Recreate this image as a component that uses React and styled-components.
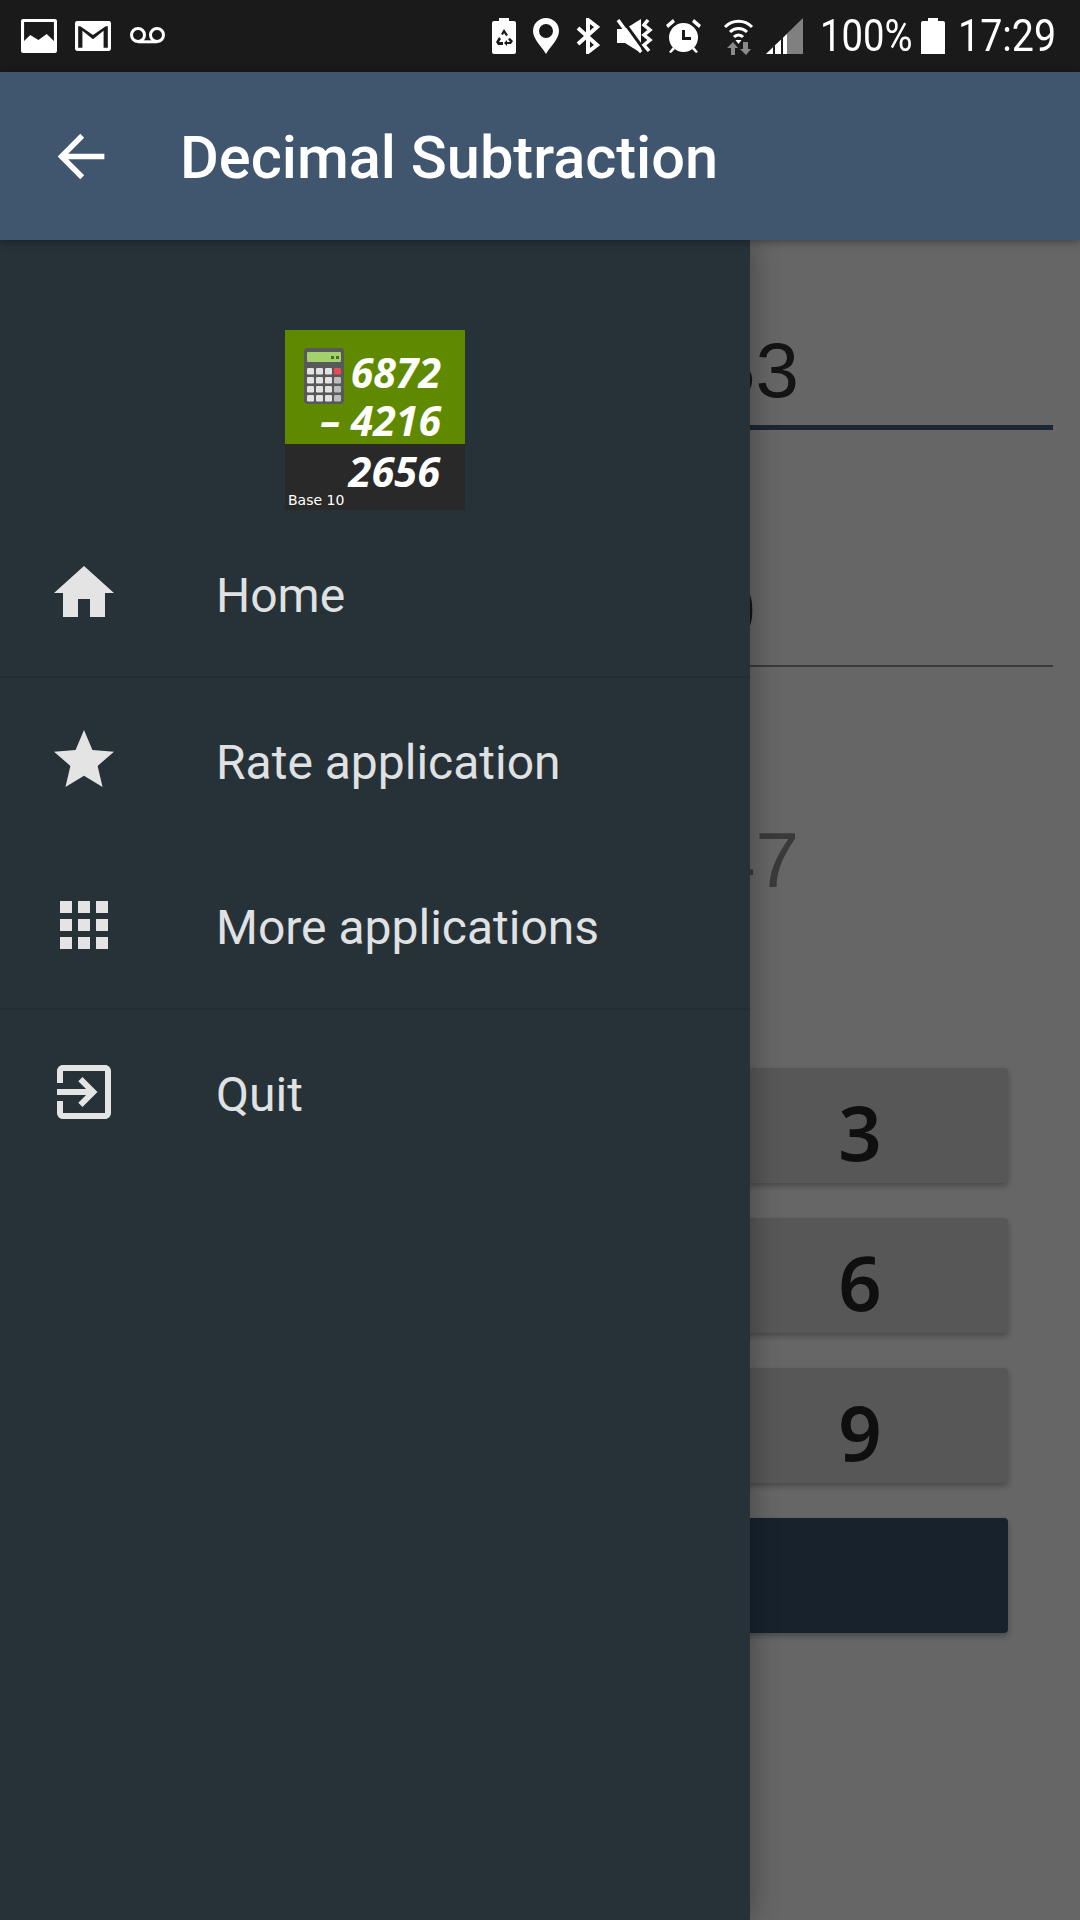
import React from "react";
import styled, { createGlobalStyle } from "styled-components";

const Global = createGlobalStyle`
  html, body { margin: 0; padding: 0; background: #fff; }
  body { font-family: Roboto, "Liberation Sans", sans-serif; }
  * { box-sizing: border-box; }
`;

const Screen = styled.div`
  width: 1080px; height: 1920px; overflow: hidden;
  display: flex; flex-direction: column; background: #fff;
`;
const StatusBar = styled.div`
  height: 72px; flex: none; background: #1a1a1a; color: #fff;
  display: flex; align-items: center; justify-content: space-between;
  padding: 0 24px 0 21px;
`;
const StatusGroup = styled.div`display: flex; align-items: center;`;
const StatusIcon = styled.svg`
  display: block; flex: none; fill: currentColor;
  margin-left: ${p => p.$gap || 0}px;
`;
const StatusText = styled.span`
  display: inline-block; font-weight: 400; font-size: 45px; line-height: 72px;
  width: ${p => p.$w}px; margin-left: ${p => p.$gap}px;
  white-space: nowrap; transform: scaleX(${p => p.$sx}); transform-origin: left center;
`;
const AppBar = styled.header`
  height: 168px; flex: none; background: #3f566e; color: #fff; position: relative; z-index: 3;
  display: flex; align-items: center; padding-left: 46px;
  box-shadow: 0 2px 8px rgba(0,0,0,.35);
`;
const BackIcon = styled.svg`
  display: block; width: 69px; height: 69px; fill: none; stroke: #fff; stroke-width: 1.9; flex: none;
`;
const Title = styled.h1`
  margin: 0 0 0 65px; font-size: 59.5px; font-weight: 500; line-height: 72px; letter-spacing: 0;
  position: relative; top: 2px;
`;
const Body = styled.main`
  flex: 1; position: relative; overflow: hidden;
  display: flex; flex-direction: column; align-items: flex-end;
  padding: 80px 27px 0 0;
`;
const Field = styled.div`
  width: 353px; height: ${p => p.$h}px; margin-bottom: ${p => p.$mb}px;
  padding: ${p => p.$top}px 0 0 12px;
  border-bottom: ${p => p.$line} solid ${p => p.$color};
  font-family: "Liberation Sans", sans-serif; font-size: 78px; line-height: 88px;
  color: ${p => p.$text};
`;
const Keypad = styled.div`
  display: flex; flex-direction: column; gap: 35px; padding-right: 45px;
`;
const Key = styled.div`
  width: 338px; height: 115px; border-radius: 4px;
  background: ${p => p.$dark ? "#3c556e" : "#d9d9d9"};
  box-shadow: 0 3px 6px rgba(0,0,0,.3);
  display: flex; align-items: center; justify-content: center;
  font-family: "Noto Sans", sans-serif; font-size: 76px; font-weight: 600; color: #262626;
  padding: 12px 0 0 42px;
`;
const Scrim = styled.div`
  position: absolute; inset: 0; background: rgba(0,0,0,.6); z-index: 1;
`;
const Drawer = styled.nav`
  position: absolute; left: 0; top: 0; bottom: 0; width: 750px; z-index: 2;
  background: #263238; padding-top: 90px;
  box-shadow: 4px 0 24px rgba(0,0,0,.28);
  display: flex; flex-direction: column;
`;
const Logo = styled.div`
  width: 180px; height: 180px; align-self: center; margin-bottom: 2px; flex: none;
  display: flex; flex-direction: column; color: #fff;
  font-family: "Open Sans", sans-serif; font-style: italic; font-weight: 700;
`;
const LogoTop = styled.div`
  height: 114px; background: #5f8a00; padding: 18px 24px 0 19px;
  font-size: 41px; line-height: 48px; white-space: nowrap;
`;
const LogoFirst = styled.div`
  display: flex; justify-content: space-between; height: 48px;
`;
const LogoSecond = styled.div`text-align: right;`;
const LogoBand = styled.div`
  height: 66px; background: #292929; display: grid; padding-right: 25px;
`;
const LogoResult = styled.div`
  grid-area: 1 / 1; justify-self: end; font-size: 41.5px; line-height: 54px;
`;
const LogoBase = styled.div`
  grid-area: 1 / 1; align-self: end; padding-left: 3px;
  font: 400 14px/20px "DejaVu Sans", sans-serif;
`;
const Item = styled.div`
  height: 166px; flex: none; display: flex; align-items: center; padding-left: 48px;
  border-bottom: ${p => p.$divider ? "2px solid #222c33" : "none"};
  color: #e0e1e2;
`;
const ItemIcon = styled.svg`
  display: block; width: 72px; height: 72px; fill: #e4e4e4; flex: none;
  margin-top: -3px;
  filter: ${p => p.$soft ? "blur(0.7px)" : "none"};
`;
const ItemLabel = styled.span`
  margin-left: 96px; font-size: 48px; line-height: 60px; font-weight: 400;
  position: relative; top: 2px;
`;

const items = [
  { label: "Home", divider: true, d: "M10 20v-6h4v6h5v-8h3L12 3 2 12h3v8z" },
  { label: "Rate application", d: "M12 17.27L18.18 21l-1.64-7.03L22 9.24l-7.19-.61L12 2 9.19 8.63 2 9.24l5.46 4.73L5.82 21z" },
  { label: "More applications", divider: true, d: "M4 8h4V4H4v4zm6 12h4v-4h-4v4zm-6 0h4v-4H4v4zm0-6h4v-4H4v4zm6 0h4v-4h-4v4zm6-10v4h4V4h-4zm-6 4h4V4h-4v4zm6 6h4v-4h-4v4zm0 6h4v-4h-4v4z" },
  { label: "Quit", soft: true, d: "M10.09 15.59L11.5 17l5-5-5-5-1.41 1.41L12.67 11H3v2h9.67l-2.58 2.59zM19 3H5c-1.11 0-2 .9-2 2v4h2V5h14v14H5v-4H3v4c0 1.1.89 2 2 2h14c1.1 0 2-.9 2-2V5c0-1.1-.9-2-2-2z" },
];

const CalcIcon = () => (
  <svg width="40" height="56" viewBox="0 0 40 56" style={{ display: "block", flex: "none" }}>
    <rect width="40" height="56" rx="4" fill="#58595b" />
    <rect x="3" y="4" width="34" height="10" rx="1" fill="#a3d26a" />
    <rect x="27" y="8" width="3" height="3" fill="#4f6b33" />
    <rect x="32" y="8" width="3" height="3" fill="#4f6b33" />
    {[0, 1, 2, 3].flatMap(r => [0, 1, 2, 3].map(c => (
      <rect key={`${r}-${c}`} x={3 + c * 9} y={20 + r * 9} width="7" height="6.5" rx="1.2"
        fill={r === 0 && c === 3 ? "#ee4a55" : c === 3 ? "#bdbdbd" : "#e3e3e3"} />
    )))}
  </svg>
);

export default function App() {
  return (
    <Screen>
      <Global />
      <StatusBar>
        <StatusGroup>
          <StatusIcon width="36" height="34" viewBox="0 0 35 34" preserveAspectRatio="none">
            <path fillRule="evenodd" d="M2 0h31a2 2 0 0 1 2 2v30a2 2 0 0 1-2 2H2a2 2 0 0 1-2-2V2a2 2 0 0 1 2-2zM3 3v19l6-6 8 5 8-6 7 7V3z" />
          </StatusIcon>
          <StatusIcon $gap={18} width="36" height="30" viewBox="0 0 34 28" preserveAspectRatio="none">
            <path fillRule="evenodd" d="M2 0h30a2 2 0 0 1 2 2v24a2 2 0 0 1-2 2H2a2 2 0 0 1-2-2V2a2 2 0 0 1 2-2zM3 5v20h4V9l10 8 10-8v16h4V5h-2L17 13 5 5z" />
          </StatusIcon>
          <StatusIcon $gap={18} width="37" height="18" viewBox="0 0 37 18" fill="none">
            <g fill="none" stroke="#fff" strokeWidth="3">
              <circle cx="9" cy="8" r="6.5" />
              <circle cx="28" cy="8" r="6.5" />
              <path d="M9 14.8h19" />
            </g>
          </StatusIcon>
        </StatusGroup>
        <StatusGroup>
          <StatusIcon width="24" height="36" viewBox="0 0 24 36">
            <path fillRule="evenodd" d="M7 0h10v3h5a2 2 0 0 1 2 2v29a2 2 0 0 1-2 2H2a2 2 0 0 1-2-2V5a2 2 0 0 1 2-2h5zM12 11l-3 5 2 1 1-2 2 3 2-1zM7 19l-3 5 2 3h5v-3H7l2-3zM18 20l-2 1 2 3h-3l0-2-3 3 3 3v-2h4l2-3z" />
          </StatusIcon>
          <StatusIcon $gap={17} width="26" height="36" viewBox="0 0 26 36">
            <path fillRule="evenodd" d="M13 0a13 13 0 0 1 13 13c0 8-9 16-13 23C9 29 0 21 0 13A13 13 0 0 1 13 0zm0 6a7 7 0 1 0 0 14 7 7 0 0 0 0-14z" />
          </StatusIcon>
          <StatusIcon $gap={17} width="24" height="36" viewBox="0 0 24 36">
            <path fill="none" stroke="#fff" strokeWidth="4" d="M2 10l19 17-9 7V2l9 7L2 26" />
          </StatusIcon>
          <StatusIcon $gap={16} width="39" height="34" viewBox="0 0 39 34">
            <path d="M1 10h8L25 0v34L9 24H1z" />
            <path d="M5 -1l24 33" stroke="#1a1a1a" strokeWidth="3" />
            <path d="M2 1l23 32" stroke="#fff" strokeWidth="3.500" />
            <path d="M32 1l-4 5 6 5-6 5 6 5-6 5 5 6" fill="none" stroke="#fff" strokeWidth="3.500" />
          </StatusIcon>
          <StatusIcon $gap={11} width="35" height="34" viewBox="0 0 35 34">
            <path fillRule="evenodd" d="M17.5 4a14.500 14.500 0 1 1 0 29 14.500 14.500 0 0 1 0-29zM16 11v10h9v-3h-6v-7z" />
            <path d="M0 6l7-6 2 3-7 6zM35 6l-7-6-2 3 7 6zM3 33l4-5 2 2-4 4zM32 33l-4-5-2 2 4 4z" />
          </StatusIcon>
          <StatusIcon $gap={22} width="31" height="37" viewBox="0 0 31 37">
            <g fill="none" stroke="#fff" strokeWidth="3">
              <path d="M2 9a19 19 0 0 1 27 0" />
              <path d="M7 14a12 12 0 0 1 17 0" />
              <path d="M11 19a6 6 0 0 1 9 0" />
            </g>
            <path d="M15.500 26l-3-4h6z" />
            <path d="M8 37v-7H4l6-6 5 6h-3v7zM20 24v7h-3l6 6 5-6h-3v-7z" fill="#8a8a8a" />
          </StatusIcon>
          <StatusIcon $gap={12} width="37" height="36" viewBox="0 0 37 36">
            <path d="M37 0v36H0z" fill="#808080" />
            <path d="M21 36V16L0 36z" fill="#fff" />
            <path d="M7 29v7h2v-9zM15 21v15h2V19z" fill="#1a1a1a" />
          </StatusIcon>
          <StatusText $gap={17} $w={92} $sx={0.85}>100%</StatusText>
          <StatusIcon $gap={9} width="24" height="36" viewBox="0 0 24 36">
            <path d="M7 0h10v3h5a2 2 0 0 1 2 2v31H0V5a2 2 0 0 1 2-2h5z" />
          </StatusIcon>
          <StatusText $gap={13} $w={98} $sx={0.875}>17:29</StatusText>
        </StatusGroup>
      </StatusBar>
      <AppBar>
        <BackIcon viewBox="0 0 24 24">
          <path d="M20.3 12H5.400M12.600 4.800L5.400 12l7.200 7.200" />
        </BackIcon>
        <Title>Decimal Subtraction</Title>
      </AppBar>
      <Body>
        <Field $h={110} $mb={130} $top={6} $line="5px" $color="#466280" $text="#323232">53</Field>
        <Field $h={107} $mb={146} $top={6} $line="2px" $color="#919191" $text="#323232">0</Field>
        <Field $h={105} $mb={150} $top={3} $line="0" $color="transparent" $text="#919191">47</Field>
        <Keypad>
          <Key>3</Key>
          <Key>6</Key>
          <Key>9</Key>
          <Key $dark />
        </Keypad>
        <Scrim />
        <Drawer>
          <Logo>
            <LogoTop>
              <LogoFirst>
                <CalcIcon />
                <span>6872</span>
              </LogoFirst>
              <LogoSecond>– 4216</LogoSecond>
            </LogoTop>
            <LogoBand>
              <LogoResult>2656</LogoResult>
              <LogoBase>Base 10</LogoBase>
            </LogoBand>
          </Logo>
          {items.map(it => (
            <Item key={it.label} $divider={it.divider}>
              <ItemIcon viewBox="0 0 24 24" $soft={it.soft}><path d={it.d} /></ItemIcon>
              <ItemLabel>{it.label}</ItemLabel>
            </Item>
          ))}
        </Drawer>
      </Body>
    </Screen>
  );
}
